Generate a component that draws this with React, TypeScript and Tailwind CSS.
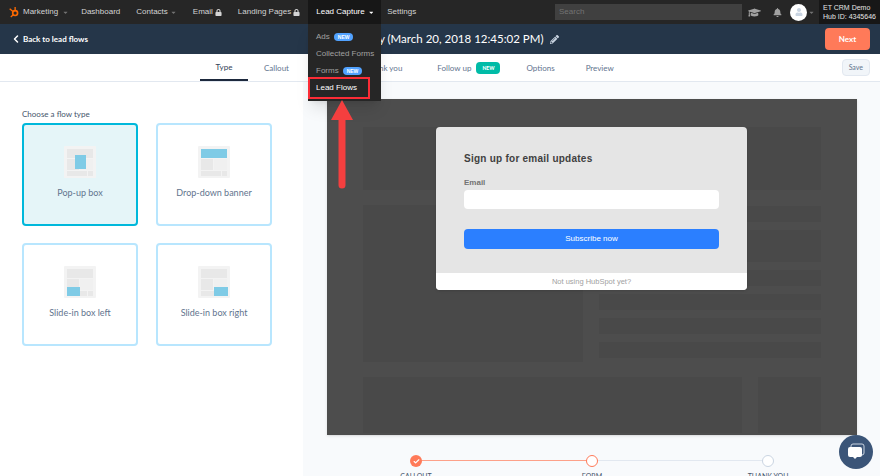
import React from "react";
import { ChevronLeft, Check } from "lucide-react";
import { FaBell, FaCaretDown, FaGraduationCap, FaLock, FaPencilAlt, FaUser } from "react-icons/fa";

const navItems = [
  { label: "Dashboard" },
  { label: "Contacts", caret: true },
  { label: "Email", lock: true },
  { label: "Landing Pages", lock: true },
];

function NewBadge() {
  return (
    <span className="rounded-full bg-blue-400 px-1 text-[5px] font-bold leading-2 text-white">NEW</span>
  );
}

function FlowIcon({ type }: { type: string }) {
  const blue = "#7fcbe6";
  const grey = "#e8e8e8";
  return (
    <svg width="32" height="32" viewBox="0 0 32 32">
      <rect width="32" height="32" rx="1" fill="#f3f3f3" />
      <rect x="3" y="3" width="26" height="9" fill={type === "banner" ? blue : grey} />
      <rect x="3" y="13" width="12" height="11" fill={grey} />
      <rect x="16" y="13" width="13" height="11" fill="#f0f0f0" />
      <rect x="3" y="25" width="20" height="5" fill={grey} />
      <rect x="24" y="25" width="5" height="5" fill={grey} />
      {type === "popup" && <rect x="11" y="9" width="11" height="14" fill={blue} />}
      {type === "left" && <rect x="3" y="21" width="13" height="9" fill={blue} />}
      {type === "right" && <rect x="16" y="21" width="14" height="9" fill={blue} />}
    </svg>
  );
}

function FlowCard({ type, label, active }: { type: string; label: string; active?: boolean }) {
  return (
    <div
      className={`flex h-[103px] w-[116px] flex-col items-center rounded-sm border-2 pt-[21px] ${
        active ? "border-cyan-500 bg-[#e5f5f8]" : "border-sky-200 bg-white"
      }`}
    >
      <FlowIcon type={type} />
      <span className="mt-2 text-[9px] text-slate-500">{label}</span>
    </div>
  );
}

function Block({ className }: { className: string }) {
  return <div className={`bg-neutral-700/25 ${className}`} />;
}

function Step({ label, state }: { label: string; state: "done" | "current" | "todo" }) {
  return (
    <div className="relative flex w-24 flex-col items-center gap-1.5">
      {state === "done" && (
        <div className="flex size-3 items-center justify-center rounded-full bg-[#ff7a59]">
          <Check size={7} strokeWidth={4} className="text-white" />
        </div>
      )}
      {state === "current" && <div className="size-3 rounded-full border border-[#ff7a59] bg-white" />}
      {state === "todo" && <div className="size-3 rounded-full border border-slate-300 bg-white" />}
      <span className="text-[7px] leading-none text-slate-600">{label}</span>
    </div>
  );
}

export default function App() {
  return (
    <div className="relative flex h-[476px] w-[880px] flex-col overflow-hidden bg-slate-50 font-['Lato',sans-serif]">
      {/* top nav */}
      <div className="flex h-6 shrink-0 items-center whitespace-nowrap bg-neutral-800 font-['Liberation_Sans',sans-serif] text-[8px] text-neutral-300">
        <div className="flex items-center gap-1 pl-2">
          <svg width="11" height="12" viewBox="0 0 20 22" className="text-orange-500">
            <circle cx="13" cy="13" r="4.5" fill="none" stroke="currentColor" strokeWidth="3" />
            <path d="M13 8V2M9 10L3 5M9.5 16L5 20" stroke="currentColor" strokeWidth="2.4" fill="none" />
          </svg>
          <span>Marketing</span>
          <FaCaretDown size={7} className="text-neutral-500" />
        </div>
        <div className="flex items-center gap-4 pl-3">
          {navItems.map((item) => (
            <div key={item.label} className="flex items-center gap-0.5">
              <span>{item.label}</span>
              {item.caret && <FaCaretDown size={7} className="text-neutral-500" />}
              {item.lock && <FaLock size={7} />}
            </div>
          ))}
        </div>
        <div className="ml-2 flex h-full w-[73px] items-center gap-1 bg-neutral-900 px-2 text-white">
          Lead Capture
          <FaCaretDown size={7} />
        </div>
        <span className="ml-1.5">Settings</span>
        <div className="ml-auto flex h-full items-center">
          <div className="flex h-4 w-[187px] items-center bg-neutral-700 px-1 text-neutral-500">Search</div>
          <FaGraduationCap size={13} className="ml-1.5 text-neutral-400" />
          <FaBell size={9} className="ml-3 text-neutral-400" />
          <div className="ml-2 flex size-[17px] items-center justify-center rounded-full bg-white">
            <FaUser size={8} className="text-slate-300" />
          </div>
          <FaCaretDown size={7} className="ml-px text-neutral-500" />
          <div className="ml-1 flex h-full w-[61px] flex-col justify-center bg-neutral-900 pl-1 text-[7px] leading-[9px] text-neutral-200">
            <span>ET CRM Demo</span>
            <span>Hub ID: 4345646</span>
          </div>
        </div>
      </div>

      {/* title bar */}
      <div className="flex h-[30px] shrink-0 items-center bg-[#253649] pr-2.5 text-white">
        <div className="flex items-center gap-px pl-2.5 text-[8px] font-bold">
          <ChevronLeft size={12} strokeWidth={3} />
          Back to lead flows
        </div>
        <div className="ml-[291px] flex items-center gap-1.5 text-[11.5px]">
          <span>y (March 20, 2018 12:45:02 PM)</span>
          <FaPencilAlt size={9} className="text-slate-300" />
        </div>
        <div className="ml-auto flex h-5.5 w-[45px] items-center justify-center rounded-sm bg-[#ff7a59] text-[8px] font-bold">
          Next
        </div>
      </div>

      {/* tabs */}
      <div className="flex h-7 shrink-0 items-center border-b border-slate-200 bg-white pr-2.5 text-[8px] text-slate-500">
        <div className="ml-[200px] flex h-full w-12 items-center justify-center border-b-2 border-slate-800 text-slate-700">
          Type
        </div>
        <span className="ml-4">Callout</span>
        <span className="ml-[90px]">nk you</span>
        <span className="ml-[35px]">Follow up</span>
        <span className="ml-[5px] rounded-sm bg-teal-500 px-1.5 py-0.5 text-[5px] font-black leading-2 text-white">NEW</span>
        <span className="ml-[26px]">Options</span>
        <span className="ml-[31px]">Preview</span>
        <div className="ml-auto rounded-sm border border-slate-200 bg-slate-100 px-1.5 py-0.5 text-[7px] text-slate-500">
          Save
        </div>
      </div>

      <div className="flex min-h-0 flex-1">
        {/* flow type panel */}
        <div className="w-[303px] shrink-0 bg-white pl-[22px] pt-6">
          <div className="mb-px text-[8px] leading-4 text-slate-600">Choose a flow type</div>
          <div className="grid w-fit grid-cols-2 gap-x-[18px] gap-y-[17px]">
            <FlowCard type="popup" label="Pop-up box" active />
            <FlowCard type="banner" label="Drop-down banner" />
            <FlowCard type="left" label="Slide-in box left" />
            <FlowCard type="right" label="Slide-in box right" />
          </div>
        </div>

        {/* preview */}
        <div className="flex flex-1 flex-col pl-6 pt-[17px]">
          <div className="relative flex h-[336px] w-[530px] shrink-0 flex-col gap-[15px] bg-[#4d4d4d] px-9 pb-0.5 pt-7 shadow-sm">
            <div className="flex h-[235px] gap-4">
              <div className="flex w-[220px] flex-col gap-[15px]">
                <Block className="h-[63px]" />
                <Block className="flex-1" />
              </div>
              <div className="flex flex-1 flex-col gap-2">
                <Block className="mb-2 h-[63px]" />
                <Block className="h-4" />
                <Block className="h-8" />
                <Block className="h-4" />
                <Block className="h-4" />
                <Block className="h-4" />
                <Block className="h-4" />
              </div>
            </div>
            <div className="flex flex-1 gap-4">
              <Block className="flex-1" />
              <Block className="w-[63px]" />
            </div>

            {/* popup over the wireframe */}
            <div className="absolute left-[109px] top-7 flex h-[163px] w-[311px] flex-col overflow-hidden rounded-sm bg-neutral-200 font-['Liberation_Sans',sans-serif] shadow">
              <div className="flex flex-1 flex-col px-7 pt-5">
                <div className="text-[10px] font-bold leading-6 tracking-wide text-neutral-700">Sign up for email updates</div>
                <div className="mt-1.5 text-[8px] font-bold leading-3 text-neutral-500">Email</div>
                <div className="mt-px h-[19px] rounded-sm bg-white" />
                <div className="mt-5 flex h-5 items-center justify-center rounded-sm bg-blue-500 text-[8px] text-white">
                  Subscribe now
                </div>
              </div>
              <div className="flex h-[17px] items-center justify-center bg-white text-[7.5px] text-neutral-400">
                Not using HubSpot yet?
              </div>
            </div>
          </div>

          {/* steps */}
          <div className="relative ml-[41px] mt-5 flex w-[448px] justify-between">
            <div className="absolute left-12 top-[5px] h-px w-44 bg-[#ff7a59]/70" />
            <div className="absolute left-[224px] top-[5px] h-px w-44 bg-slate-200" />
            <Step label="CALLOUT" state="done" />
            <Step label="FORM" state="current" />
            <Step label="THANK YOU" state="todo" />
          </div>
        </div>
      </div>

      {/* lead capture dropdown */}
      <div className="absolute left-[308px] top-6 flex w-[73px] flex-col gap-[5px] bg-neutral-800 py-[7px] pl-2 font-['Liberation_Sans',sans-serif] text-[8px] leading-3 text-neutral-400 shadow-lg">
        <div className="flex items-center gap-1">Ads <NewBadge /></div>
        <div>Collected Forms</div>
        <div className="flex items-center gap-1">Forms <NewBadge /></div>
        <div className="text-white">Lead Flows</div>
      </div>
      <div className="absolute left-[308px] top-[77px] h-[22px] w-[62px] border-2 border-red-500" />

      {/* red arrow */}
      <svg className="absolute left-[330px] top-[99px]" width="24" height="90" viewBox="0 0 24 90">
        <path d="M12 1L23 21H15.5V86a3.5 3.5 0 0 1-7 0V21H1Z" fill="#f43f3f" />
      </svg>

      {/* chat bubble */}
      <div className="absolute left-[839px] top-[435px] flex size-[34px] items-center justify-center rounded-full bg-[#3b5578]">
        <svg width="18" height="18" viewBox="0 0 18 18">
          <rect x="4" y="1" width="13" height="11" rx="2" fill="none" stroke="#cbd5e1" strokeWidth="1" />
          <path d="M3 4h10a2 2 0 0 1 2 2v6a2 2 0 0 1-2 2h-3l-2 2-2-2H3a2 2 0 0 1-2-2V6a2 2 0 0 1 2-2Z" fill="#fff" />
        </svg>
      </div>
    </div>
  );
}
